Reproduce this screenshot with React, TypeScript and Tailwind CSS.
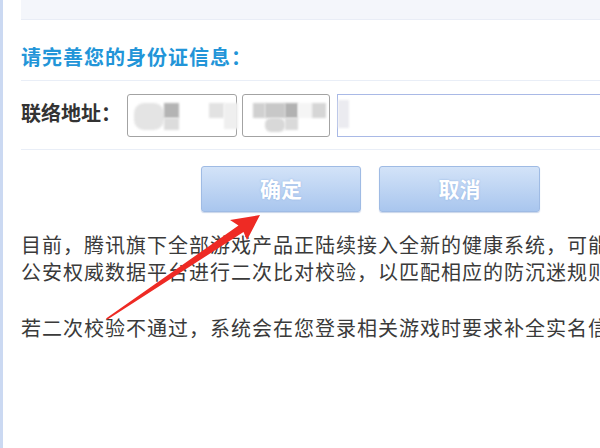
import React from "react";

const font = { fontFamily: '"Noto Sans CJK SC", "Noto Sans", sans-serif' };

function Blk({ w, h, c, mt = 0, r = 0 }: { w: number; h: number; c: string; mt?: number; r?: number }) {
  return <div style={{ width: w, height: h, background: c, marginTop: mt, borderRadius: r }} className="shrink-0 blur-[1px]" />;
}

export default function App() {
  return (
    <div style={font} className="relative w-[600px] h-[448px] overflow-hidden bg-white border-l-[3px] border-[#cbd9f2] pl-[18px]">
      <div className="h-[20px] bg-[#f4f6fb] border-b border-[#e9edf6] -mr-[4px]" />
      <div className="mt-[23px] h-[28px] leading-[28px] text-[20px] font-bold text-[#2295d8] tracking-[1px] whitespace-nowrap">
        请完善您的身份证信息：
      </div>
      <div className="mt-[9px] h-px bg-[#e9eef7]" />
      <div className="flex items-center pt-[13px] pb-[12px]">
        <div className="w-[106px] text-[20px] font-bold text-[#333] whitespace-nowrap leading-[28px] -mt-[6px]">联络地址：</div>
        <div className="w-[110px] h-[43px] border border-[#a3a3a3] rounded-[3px] flex items-start pt-[8px] pl-[6px]">
          <Blk w={30} h={27} c="#e4e4e4" r={10} />
          <div className="flex flex-col shrink-0">
            <Blk w={15} h={15} c="#b4b4b4" />
            <Blk w={15} h={12} c="#dcdcdc" />
          </div>
          <div className="w-[30px] shrink-0" />
          <Blk w={15} h={15} c="#e2e2e2" />
          <Blk w={14} h={26} c="#efefef" />
        </div>
        <div className="ml-[5px] w-[88px] h-[43px] border border-[#a3a3a3] rounded-[3px] flex items-start pt-[8px] pl-[10px]">
          <Blk w={12} h={15} c="#d0d0d0" />
          <div className="flex flex-col shrink-0">
            <Blk w={20} h={15} c="#c8c8c8" />
            <Blk w={20} h={14} c="#d8d8d8" r={6} />
          </div>
          <div className="flex flex-col shrink-0">
            <Blk w={13} h={15} c="#b2b2b2" />
            <Blk w={13} h={12} c="#dadada" />
          </div>
          <Blk w={14} h={15} c="#f5f5f5" />
          <Blk w={14} h={15} c="#d6d6d6" />
        </div>
        <div className="ml-[7px] flex-1 h-[43px] border border-[#a9b9e6] -mr-[4px] flex items-start pt-[5px]">
          <Blk w={11} h={28} c="#ebebf0" />
        </div>
      </div>
      <div className="h-px bg-[#e9eef7]" />
      <div className="mt-[16px] flex ml-[180px] gap-[18px]">
        <button className="w-[160px] h-[46px] rounded-[3px] border border-[#9fbbe4] bg-gradient-to-b from-[#d3e3f8] to-[#a9c6ee] text-white text-[21px] font-bold [text-shadow:0_0_2px_#8fb0e0] shadow-[0_1px_1px_rgba(120,150,200,0.4)]">
          确定
        </button>
        <button className="w-[161px] h-[46px] rounded-[3px] border border-[#9fbbe4] bg-gradient-to-b from-[#d3e3f8] to-[#a9c6ee] text-white text-[21px] font-bold [text-shadow:0_0_2px_#8fb0e0] shadow-[0_1px_1px_rgba(120,150,200,0.4)]">
          取消
        </button>
      </div>
      <div className="mt-[19px] text-[20px] leading-[27px] text-[#3a3a3a] tracking-[1px] whitespace-nowrap">
        <p>目前，腾讯旗下全部游戏产品正陆续接入全新的健康系统，可能会</p>
        <p>公安权威数据平台进行二次比对校验，以匹配相应的防沉迷规则。</p>
        <p className="mt-[29px]">若二次校验不通过，系统会在您登录相关游戏时要求补全实名信息</p>
      </div>
      <svg className="absolute left-0 top-0 pointer-events-none" width="600" height="448" viewBox="0 0 600 448">
        <polygon
          points="257,215 227,220 235.5,225.5 103,318.5 104.5,319.5 240.5,232 244,240"
          fill="#ee2a24"
        />
      </svg>
    </div>
  );
}
